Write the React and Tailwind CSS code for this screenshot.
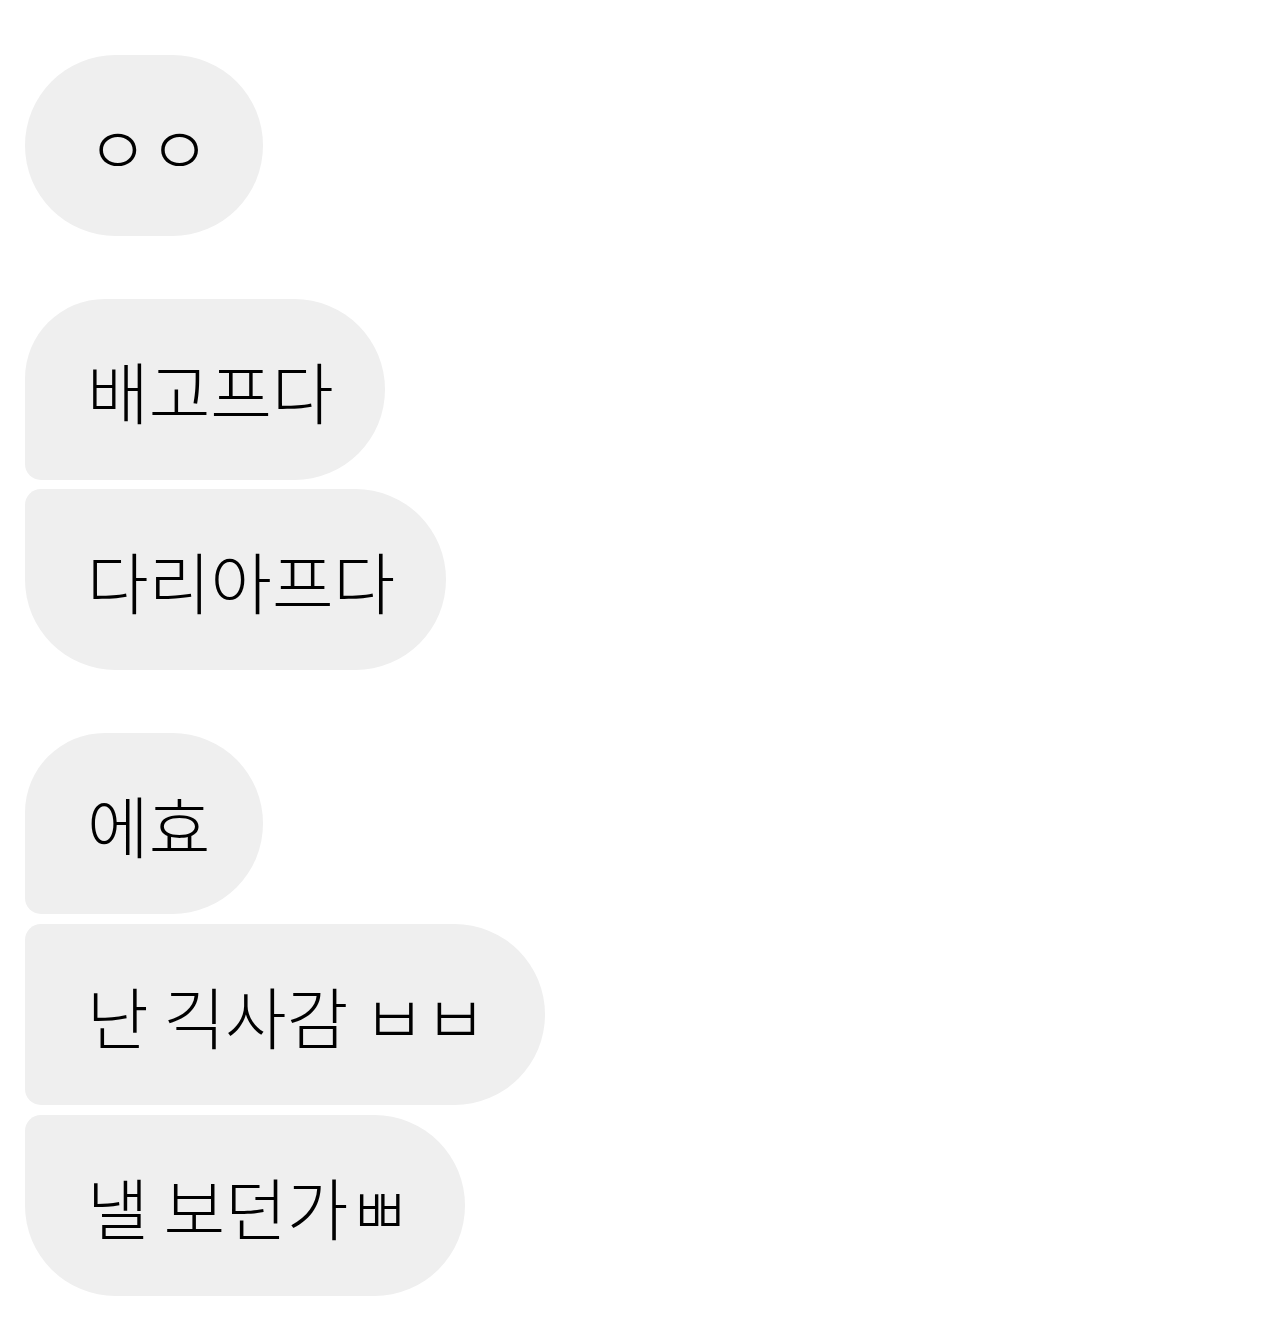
import React from "react";

const font = { fontFamily: '"Noto Sans CJK KR", "Noto Sans", sans-serif' };

function Bubble({ w, radius, children }) {
  return (
    <div
      className={`h-[181px] bg-[#efefef] flex items-center pl-[62px] text-[67px] leading-none font-light text-black ${w} ${radius}`}
      style={font}
    >
      <span className="whitespace-pre">{children}</span>
    </div>
  );
}

export default function App() {
  return (
    <div className="w-[1280px] h-[1331px] bg-white pt-[55px] pl-[25px] flex flex-col">
      <Bubble w="w-[238px]" radius="rounded-[91px]">ㅇㅇ</Bubble>

      <div className="mt-[63px] flex flex-col gap-[9px]">
        <Bubble w="w-[360px]" radius="rounded-tl-[80px] rounded-tr-[91px] rounded-br-[91px] rounded-bl-[16px]">배고프다</Bubble>
        <Bubble w="w-[421px]" radius="rounded-tl-[16px] rounded-tr-[91px] rounded-br-[91px] rounded-bl-[91px]">다리아프다</Bubble>
      </div>

      <div className="mt-[63px] flex flex-col gap-[10px]">
        <Bubble w="w-[238px]" radius="rounded-tl-[80px] rounded-tr-[91px] rounded-br-[91px] rounded-bl-[16px]">에효</Bubble>
        <Bubble w="w-[520px]" radius="rounded-tl-[16px] rounded-tr-[91px] rounded-br-[91px] rounded-bl-[16px]">난 긱사감 ㅂㅂ</Bubble>
        <Bubble w="w-[440px]" radius="rounded-tl-[16px] rounded-tr-[91px] rounded-br-[91px] rounded-bl-[91px]">낼 보던가ㅃ</Bubble>
      </div>
    </div>
  );
}
